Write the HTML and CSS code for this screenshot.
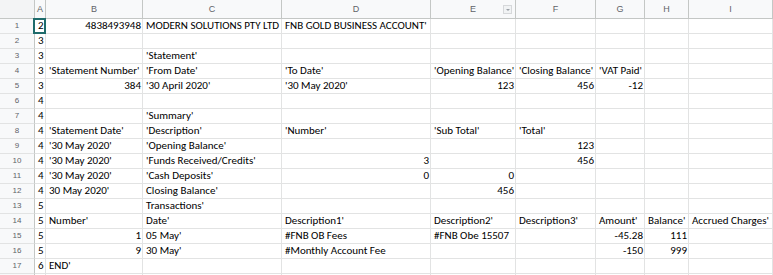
FILE: index.html
```html
<!DOCTYPE html>
<html>
<head>
<meta charset="utf-8">
<link rel="stylesheet" href="styles.css">
</head>
<body>
<div class="sheet">
  <div class="corner"></div>
  <div class="ch">A</div><div class="ch">B</div><div class="ch">C</div><div class="ch">D</div>
  <div class="ch filtered">E<span class="filter-btn"></span></div>
  <div class="ch">F</div><div class="ch">G</div><div class="ch">H</div><div class="ch">I</div>

  <div class="rh">1</div>
  <div class="c sel">2</div><div class="c num">4838493948</div><div class="c">MODERN SOLUTIONS PTY LTD</div><div class="c">FNB GOLD BUSINESS ACCOUNT'</div><div class="c"></div><div class="c"></div><div class="c"></div><div class="c"></div><div class="c"></div>

  <div class="rh">2</div>
  <div class="c">3</div><div class="c"></div><div class="c"></div><div class="c"></div><div class="c"></div><div class="c"></div><div class="c"></div><div class="c"></div><div class="c"></div>

  <div class="rh">3</div>
  <div class="c">3</div><div class="c"></div><div class="c">'Statement'</div><div class="c"></div><div class="c"></div><div class="c"></div><div class="c"></div><div class="c"></div><div class="c"></div>

  <div class="rh">4</div>
  <div class="c">3</div><div class="c">'Statement Number'</div><div class="c">'From Date'</div><div class="c">'To Date'</div><div class="c">'Opening Balance'</div><div class="c">'Closing Balance'</div><div class="c">'VAT Paid'</div><div class="c"></div><div class="c"></div>

  <div class="rh">5</div>
  <div class="c">3</div><div class="c num">384</div><div class="c">'30 April 2020'</div><div class="c">'30 May 2020'</div><div class="c num">123</div><div class="c num">456</div><div class="c num">-12</div><div class="c"></div><div class="c"></div>

  <div class="rh">6</div>
  <div class="c">4</div><div class="c"></div><div class="c"></div><div class="c"></div><div class="c"></div><div class="c"></div><div class="c"></div><div class="c"></div><div class="c"></div>

  <div class="rh">7</div>
  <div class="c">4</div><div class="c"></div><div class="c">'Summary'</div><div class="c"></div><div class="c"></div><div class="c"></div><div class="c"></div><div class="c"></div><div class="c"></div>

  <div class="rh">8</div>
  <div class="c">4</div><div class="c">'Statement Date'</div><div class="c">'Description'</div><div class="c">'Number'</div><div class="c">'Sub Total'</div><div class="c">'Total'</div><div class="c"></div><div class="c"></div><div class="c"></div>

  <div class="rh">9</div>
  <div class="c">4</div><div class="c">'30 May 2020'</div><div class="c">'Opening Balance'</div><div class="c"></div><div class="c"></div><div class="c num">123</div><div class="c"></div><div class="c"></div><div class="c"></div>

  <div class="rh">10</div>
  <div class="c">4</div><div class="c">'30 May 2020'</div><div class="c">'Funds Received/Credits'</div><div class="c num">3</div><div class="c"></div><div class="c num">456</div><div class="c"></div><div class="c"></div><div class="c"></div>

  <div class="rh">11</div>
  <div class="c">4</div><div class="c">'30 May 2020'</div><div class="c">'Cash Deposits'</div><div class="c num">0</div><div class="c num">0</div><div class="c"></div><div class="c"></div><div class="c"></div><div class="c"></div>

  <div class="rh">12</div>
  <div class="c">4</div><div class="c">30 May 2020'</div><div class="c">Closing Balance'</div><div class="c"></div><div class="c num">456</div><div class="c"></div><div class="c"></div><div class="c"></div><div class="c"></div>

  <div class="rh">13</div>
  <div class="c">5</div><div class="c"></div><div class="c">Transactions'</div><div class="c"></div><div class="c"></div><div class="c"></div><div class="c"></div><div class="c"></div><div class="c"></div>

  <div class="rh">14</div>
  <div class="c">5</div><div class="c">Number'</div><div class="c">Date'</div><div class="c">Description1'</div><div class="c">Description2'</div><div class="c">Description3'</div><div class="c">Amount'</div><div class="c">Balance'</div><div class="c">Accrued Charges'</div>

  <div class="rh">15</div>
  <div class="c">5</div><div class="c num">1</div><div class="c">05 May'</div><div class="c">#FNB OB Fees</div><div class="c">#FNB Obe 15507</div><div class="c"></div><div class="c num">-45.28</div><div class="c num">111</div><div class="c"></div>

  <div class="rh">16</div>
  <div class="c">5</div><div class="c num">9</div><div class="c">30 May'</div><div class="c">#Monthly Account Fee</div><div class="c"></div><div class="c"></div><div class="c num">-150</div><div class="c num">999</div><div class="c"></div>

  <div class="rh">17</div>
  <div class="c">6</div><div class="c">END'</div><div class="c"></div><div class="c"></div><div class="c"></div><div class="c"></div><div class="c"></div><div class="c"></div><div class="c"></div>

  <div class="rh"></div>
  <div class="c"></div><div class="c"></div><div class="c"></div><div class="c"></div><div class="c"></div><div class="c"></div><div class="c"></div><div class="c"></div><div class="c"></div>
</div>
</body>
</html>
```
FILE: styles.css
```css
html, body {
  margin: 0;
  padding: 0;
  background: #ffffff;
}

.sheet {
  display: grid;
  grid-template-columns: 35px 11px 97px 139px 149px 85px 80px 49px 44px 84px;
  grid-template-rows: 19px repeat(18, 15px);
  width: 773px;
  height: 275px;
  overflow: hidden;
}

.corner,
.ch,
.rh {
  box-sizing: border-box;
  background: #f8f9fa;
  color: #5f6368;
  font-family: "Liberation Sans", Arial, sans-serif;
  border-right: 1px solid #c4c7c5;
  border-bottom: 1px solid #c4c7c5;
}

.corner {
  background: #f3f4f5;
}

.ch {
  font-size: 9px;
  line-height: 18px;
  text-align: center;
  position: relative;
}

.rh {
  font-size: 8px;
  line-height: 14px;
  text-align: center;
  border-bottom-color: #e2e3e3;
}

.filter-btn {
  position: absolute;
  right: 3px;
  top: 5px;
  width: 9px;
  height: 9px;
  box-sizing: border-box;
  border: 1px solid #d6d8da;
  background: #f1f3f4;
}

.filter-btn::after {
  content: "";
  position: absolute;
  left: 2px;
  top: 3px;
  border-left: 2px solid transparent;
  border-right: 2px solid transparent;
  border-top: 2px solid #9aa0a6;
}

.c {
  box-sizing: border-box;
  border-right: 1px solid #e2e3e3;
  border-bottom: 1px solid #e2e3e3;
  font-family: Carlito, Calibri, Lato, sans-serif;
  font-size: 11px;
  line-height: 14px;
  color: #000000;
  padding: 0 2px 0 3px;
  white-space: nowrap;
  overflow: hidden;
}

.num {
  text-align: right;
  padding: 0 1px 0 2px;
}

.sel {
  position: relative;
  overflow: visible;
}

.sel::after {
  content: "";
  position: absolute;
  left: -2px;
  top: -1px;
  right: -1px;
  bottom: -1px;
  border: 2px solid #1e6b6b;
}
```
